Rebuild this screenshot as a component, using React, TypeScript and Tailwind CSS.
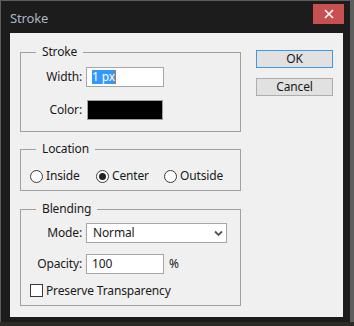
export default function App() {
  const label = "w-[61px] text-right text-[12px] leading-[16px] text-[#1a1a1a]";
  return (
    <div className="w-[354px] h-[326px] bg-[#5e5e5e] flex flex-col font-['Noto_Sans',sans-serif] tracking-[-0.15px] overflow-hidden">
      <div className="ml-px mt-px w-[349px] h-[321px] shrink-0 bg-[#1c1c1c] flex flex-col">
        {/* title bar */}
        <div className="h-[32px] shrink-0 flex items-start">
          <div className="ml-[9px] mt-[8px] text-[13px] leading-[18px] text-[#aab6c4]">Stroke</div>
          <div className="ml-auto mt-[3px] mr-[6px] w-[31px] h-[20px] bg-[#c75050] flex items-center justify-center">
            <svg width="10" height="10" viewBox="0 0 10 10">
              <path d="M1 1 L9 9 M9 1 L1 9" stroke="#ffffff" strokeWidth="1.6" />
            </svg>
          </div>
        </div>
        {/* client area */}
        <div className="ml-[9px] w-[333px] h-[284px] bg-[#f0f0f0] flex items-start">
          {/* left column */}
          <div className="ml-[10px] pt-[19px] w-[221px] flex flex-col">
            {/* Stroke group */}
            <div className="relative h-[80px] border border-[#a0a0a0] pt-[14px]">
              <span className="absolute -top-[9px] left-[15px] px-[6px] bg-[#f0f0f0] text-[12px] leading-[16px] text-[#1a1a1a]">Stroke</span>
              <div className="flex items-center h-[20px]">
                <span className={label}>Width:</span>
                <div className="ml-[4px] w-[78px] h-[20px] border border-[#a6a6a6] bg-white flex items-center pl-[5px]">
                  <span className="bg-[#3399ff] text-white text-[12px] leading-[14px]">1 px</span>
                  <span className="w-px h-[14px] bg-[#c8701e]" />
                </div>
              </div>
              <div className="flex items-center h-[20px] mt-[13px]">
                <span className={label}>Color:</span>
                <div className="ml-[5px] w-[76px] h-[20px] border border-[#a0a0a0] bg-black" />
              </div>
            </div>
            {/* Location group */}
            <div className="relative mt-[17px] h-[42px] border border-[#a0a0a0] pt-[18px] pl-[9px]">
              <span className="absolute -top-[9px] left-[15px] px-[6px] bg-[#f0f0f0] text-[12px] leading-[16px] text-[#1a1a1a]">Location</span>
              <div className="flex items-center h-[16px] text-[12px] leading-[16px] text-[#1a1a1a]">
                <div className="w-[66px] flex items-center">
                  <span className="w-[13px] h-[13px] rounded-full border border-[#3a3a3a] bg-white" />
                  <span className="ml-[3px]">Inside</span>
                </div>
                <div className="w-[68px] flex items-center">
                  <span className="w-[13px] h-[13px] rounded-full border border-[#3a3a3a] bg-white flex items-center justify-center">
                    <span className="w-[7px] h-[7px] rounded-full bg-[#222]" />
                  </span>
                  <span className="ml-[3px]">Center</span>
                </div>
                <div className="flex items-center">
                  <span className="w-[13px] h-[13px] rounded-full border border-[#3a3a3a] bg-white" />
                  <span className="ml-[3px]">Outside</span>
                </div>
              </div>
            </div>
            {/* Blending group */}
            <div className="relative mt-[18px] h-[97px] border border-[#a0a0a0] pt-[13px]">
              <span className="absolute -top-[9px] left-[15px] px-[6px] bg-[#f0f0f0] text-[12px] leading-[16px] text-[#1a1a1a]">Blending</span>
              <div className="flex items-center h-[20px]">
                <span className={label}>Mode:</span>
                <div className="ml-[4px] w-[141px] h-[20px] border border-[#a6a6a6] bg-white flex items-center pl-[6px] pr-[3px]">
                  <span className="text-[12px] leading-[16px] text-[#1a1a1a]">Normal</span>
                  <svg className="ml-auto" width="9" height="7" viewBox="0 0 9 7">
                    <path d="M1 1.5 L4.5 5 L8 1.5" stroke="#555555" strokeWidth="1.8" fill="none" />
                  </svg>
                </div>
              </div>
              <div className="flex items-center h-[20px] mt-[11px]">
                <span className={label}>Opacity:</span>
                <div className="ml-[4px] w-[78px] h-[20px] border border-[#a6a6a6] bg-white flex items-center pl-[5px]">
                  <span className="text-[12px] leading-[16px] text-[#1a1a1a]">100</span>
                </div>
                <span className="ml-[5px] text-[12px] leading-[16px] text-[#1a1a1a]">%</span>
              </div>
              <div className="flex items-center h-[13px] mt-[10px] pl-[9px]">
                <span className="w-[13px] h-[13px] border border-[#3a3a3a] bg-white" />
                <span className="ml-[3px] text-[12px] leading-[16px] text-[#1a1a1a]">Preserve Transparency</span>
              </div>
            </div>
          </div>
          {/* right column */}
          <div className="ml-[15px] pt-[17px] flex flex-col">
            <button className="w-[77px] h-[18px] border border-[#3c9ae8] bg-[#e1e1e1] text-[12px] leading-[14px] text-[#1a1a1a] flex items-center justify-center">OK</button>
            <button className="mt-[10px] w-[77px] h-[18px] border border-[#adadad] bg-[#e1e1e1] text-[12px] leading-[14px] text-[#1a1a1a] flex items-center justify-center">Cancel</button>
          </div>
        </div>
      </div>
      <div className="flex-1 bg-[#2c2a27]" />
    </div>
  );
}
